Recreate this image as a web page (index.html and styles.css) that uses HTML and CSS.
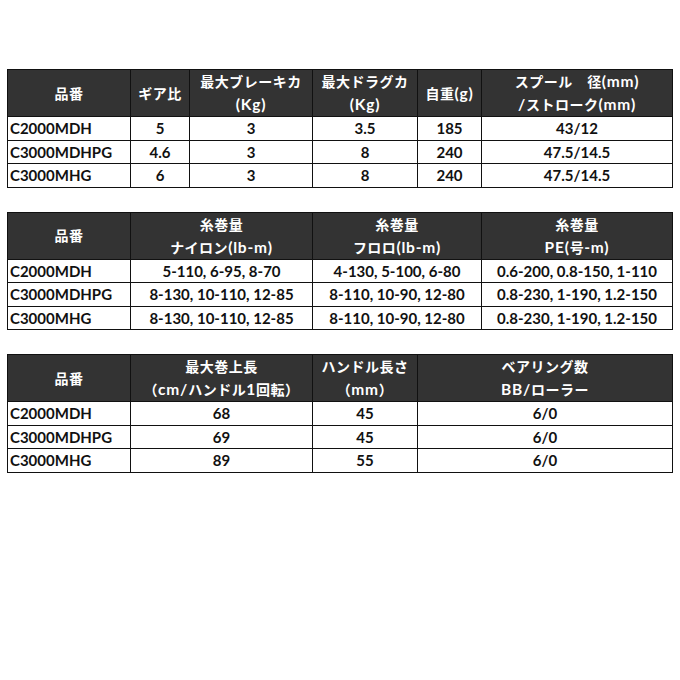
FILE: index.html
```html
<!DOCTYPE html>
<html lang="ja">
<head>
<meta charset="utf-8">
<link rel="stylesheet" href="styles.css">
</head>
<body>
<div class="page">
  <table class="spec">
    <colgroup>
      <col style="width:123px"><col style="width:59px"><col style="width:123px"><col style="width:105px"><col style="width:64px"><col>
    </colgroup>
    <thead>
      <tr>
        <th>品番</th>
        <th>ギア比</th>
        <th>最大ブレーキカ<br><span class="lat">(Kg)</span></th>
        <th>最大ドラグカ<br><span class="lat">(Kg)</span></th>
        <th>自重<span class="lat">(g)</span></th>
        <th>スプール　径<span class="lat">(mm)</span><br><span class="lat">/</span>ストローク<span class="lat">(mm)</span></th>
      </tr>
    </thead>
    <tbody>
      <tr><td class="name">C2000MDH</td><td>5</td><td>3</td><td>3.5</td><td>185</td><td>43/12</td></tr>
      <tr><td class="name">C3000MDHPG</td><td>4.6</td><td>3</td><td>8</td><td>240</td><td>47.5/14.5</td></tr>
      <tr><td class="name">C3000MHG</td><td>6</td><td>3</td><td>8</td><td>240</td><td>47.5/14.5</td></tr>
    </tbody>
  </table>

  <table class="spec">
    <colgroup>
      <col style="width:123px"><col style="width:182px"><col style="width:169px"><col>
    </colgroup>
    <thead>
      <tr>
        <th>品番</th>
        <th>糸巻量<br>ナイロン<span class="lat">(lb-m)</span></th>
        <th>糸巻量<br>フロロ<span class="lat">(lb-m)</span></th>
        <th>糸巻量<br><span class="lat">PE(</span>号<span class="lat">-m)</span></th>
      </tr>
    </thead>
    <tbody>
      <tr><td class="name">C2000MDH</td><td>5-110, 6-95, 8-70</td><td>4-130, 5-100, 6-80</td><td>0.6-200, 0.8-150, 1-110</td></tr>
      <tr><td class="name">C3000MDHPG</td><td>8-130, 10-110, 12-85</td><td>8-110, 10-90, 12-80</td><td>0.8-230, 1-190, 1.2-150</td></tr>
      <tr><td class="name">C3000MHG</td><td>8-130, 10-110, 12-85</td><td>8-110, 10-90, 12-80</td><td>0.8-230, 1-190, 1.2-150</td></tr>
    </tbody>
  </table>

  <table class="spec">
    <colgroup>
      <col style="width:123px"><col style="width:182px"><col style="width:105px"><col>
    </colgroup>
    <thead>
      <tr>
        <th>品番</th>
        <th>最大巻上長<br>（<span class="lat">cm/</span>ハンドル<span class="lat">1</span>回転）</th>
        <th>ハンドル長さ<br>（<span class="lat">mm</span>）</th>
        <th>ベアリング数<br><span class="lat">BB/</span>ローラー</th>
      </tr>
    </thead>
    <tbody>
      <tr><td class="name">C2000MDH</td><td>68</td><td>45</td><td>6/0</td></tr>
      <tr><td class="name">C3000MDHPG</td><td>69</td><td>45</td><td>6/0</td></tr>
      <tr><td class="name">C3000MHG</td><td>89</td><td>55</td><td>6/0</td></tr>
    </tbody>
  </table>
</div>
</body>
</html>
```

FILE: styles.css
```css
html, body {
  margin: 0;
  padding: 0;
  background: #ffffff;
}

.page {
  padding: 69px 0 0 7px;
  display: flex;
  flex-direction: column;
  gap: 24px;
  font-family: "Lato", "Noto Sans CJK JP", sans-serif;
}

.spec {
  width: 666px;
  table-layout: fixed;
  border-collapse: collapse;
  font-weight: 700;
}

.spec th,
.spec td {
  border: 1px solid #111111;
  padding: 0;
  text-align: center;
  vertical-align: middle;
  white-space: nowrap;
}

.spec th {
  background: #333333;
  color: #ffffff;
  font-size: 14px;
  line-height: 23px;
  height: 45.5px;
  font-weight: 700;
  letter-spacing: 0.5px;
}

.spec th .lat {
  font-size: 15.5px;
  letter-spacing: 0.8px;
}

.spec td {
  height: 22.5px;
  font-size: 15px;
  line-height: 20px;
  color: #111111;
}

.spec td.name {
  text-align: left;
  padding-left: 2px;
}
```
